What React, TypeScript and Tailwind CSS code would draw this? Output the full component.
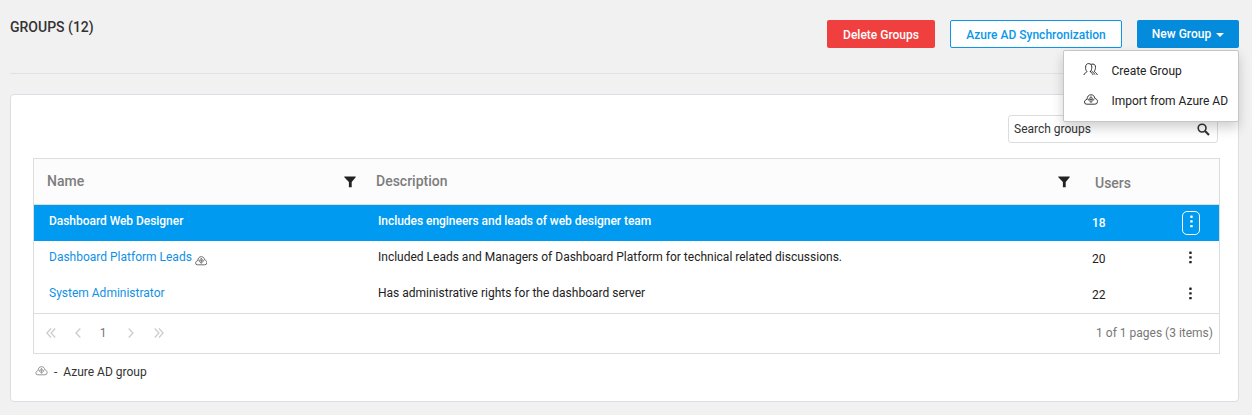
import React from "react";

type IconProps = { className?: string };

function CloudIcon({ className = "" }: IconProps) {
  return (
    <svg viewBox="0 0 14 11" className={className} fill="none" stroke="currentColor" strokeWidth="0.9" strokeLinejoin="round">
      <path d="M2.6 10.2A2.1 2.1 0 0 1 .5 8C.5 6.6 1.6 5.9 3.1 5.2 3.1 2.6 4.6.8 7 .8 9.3.8 10.6 2.2 10.8 4.4 12.5 4.8 13.5 6 13.5 7.6A2.6 2.6 0 0 1 10.9 10.2Z" />
      <path d="M7 2.7 9.8 5.6 7 8.5 4.2 5.6ZM7 2.8V8.4M4.6 5.6H9.4" strokeWidth="0.7" />
    </svg>
  );
}

function UsersIcon({ className = "" }: IconProps) {
  return (
    <svg viewBox="0 0 15 13" className={className} fill="none" stroke="currentColor" strokeWidth="0.95" strokeLinejoin="round" strokeLinecap="round">
      <path d="M.9 11.6C1.1 9.9 3.9 9.8 3.9 8.4 2.9 7.4 2.6 6.2 2.6 4.2 2.6 1.8 3.8.6 5.7.6S8.8 1.8 8.8 4.2C8.8 6.2 8.4 7.5 7.4 8.4" />
      <path d="M8.5 1.2C11 .4 12.7 1.9 12.5 4.4 12.4 6.3 12 7.2 11.3 8.2 11.3 9.3 14 9.9 14.3 11.6M7.4 8.4C7.4 9.8 9.1 9.6 10 11.6M8.9 8.3 12 11.3" />
    </svg>
  );
}

function FunnelIcon() {
  return (
    <svg viewBox="0 0 12 12" className="h-3 w-3 shrink-0 text-[#222]" fill="currentColor">
      <path d="M.3.4H11.7V1.3L7.7 6V11.2H4.9V6L.3 1.3Z" />
    </svg>
  );
}

function SearchIcon() {
  return (
    <svg viewBox="0 0 13 13" className="h-[13px] w-[13px] text-[#333]" fill="none" stroke="currentColor">
      <circle cx="5.1" cy="5.1" r="3.9" strokeWidth="1.6" />
      <path d="M8 8 12 12" strokeWidth="2.1" />
    </svg>
  );
}

function Dots() {
  return (
    <svg viewBox="0 0 3 13" className="h-[13px] w-[3px]" fill="currentColor">
      <rect x="0.2" y="0.5" width="2.5" height="2.4" rx="0.6" />
      <rect x="0.2" y="5.2" width="2.5" height="2.4" rx="0.6" />
      <rect x="0.2" y="9.9" width="2.5" height="2.4" rx="0.6" />
    </svg>
  );
}

function Chevron({ double = false, right = false }: { double?: boolean; right?: boolean }) {
  return (
    <svg viewBox="0 0 10 10" className={right ? "h-[10px] w-[10px] rotate-180" : "h-[10px] w-[10px]"} fill="none" stroke="#cdcdcd" strokeWidth="1.3">
      {double ? <path d="M5 .5.9 5 5 9.5M9.2.5 5.1 5 9.2 9.5" /> : <path d="M7.3.5 3 5 7.3 9.5" />}
    </svg>
  );
}

const rows = [
  { name: "Dashboard Web Designer", description: "Includes engineers and leads of web designer team", users: 18, selected: true },
  { name: "Dashboard Platform Leads", description: "Included Leads and Managers of Dashboard Platform for technical related discussions.", users: 20, azure: true },
  { name: "System Administrator", description: "Has administrative rights for the dashboard server", users: 22 },
];

export default function App() {
  return (
    <div className="h-[415px] w-[1252px] overflow-hidden bg-[#f1f1f1] pl-[10px] pr-[13px] font-['Roboto',sans-serif] text-[12px] leading-4 text-[#222]">
      <header className="flex h-[74px] items-start border-b border-[#dfe1e2] pt-5">
        <h1 className="mr-auto text-[14px] leading-[15px] font-medium text-[#333]">GROUPS (12)</h1>
        <button className="mr-[15px] h-7 w-[108px] rounded-[2px] bg-[#f03f3f] pt-[2px] text-center font-medium text-white">Delete Groups</button>
        <button className="mr-[15px] h-7 w-[172px] rounded-[2px] border border-[#0a97ea] bg-white pt-[2px] text-center font-medium text-[#0a97ea]">Azure AD Synchronization</button>
        <div className="relative">
          <button className="flex h-7 w-[102px] items-center justify-center gap-[5px] rounded-[2px] bg-[#058bdb] font-medium text-white">
            New Group
            <span className="mt-[2px] border-x-4 border-t-4 border-x-transparent border-t-white" />
          </button>
          <div className="absolute top-[30px] right-0 z-10 h-[72px] w-[176px] rounded-[2px] border border-[#c6c6c6] bg-white pt-[5px] shadow-[0_6px_12px_rgba(0,0,0,0.18)]">
            <div className="flex h-[30px] items-center pl-[20px]">
              <UsersIcon className="mb-1 -ml-px h-[13px] w-[15px]" />
              <span className="ml-[13.5px]">Create Group</span>
            </div>
            <div className="flex h-[30px] items-center pl-[20px]">
              <CloudIcon className="mb-1 h-[11px] w-[14px]" />
              <span className="ml-[13.5px] whitespace-nowrap">Import from Azure AD</span>
            </div>
          </div>
        </div>
      </header>

      <main className="mt-5 h-[308px] rounded-[4px] border border-[#d9dfe4] bg-white pt-5 pr-[18px] pl-[22px]">
        <div className="mr-[2px] ml-auto flex h-7 w-[210px] items-center justify-between rounded-[3px] border border-[#ddd] pr-[7px] pl-[5px] text-[#333]">
          <span>Search groups</span>
          <SearchIcon />
        </div>

        <section className="mt-[15px] h-[196px] w-[1187px] border border-[#ddd]">
          <div className="flex h-[46px] items-center border-b border-[#ddd] bg-[#fcfcfc] text-[14px] font-medium text-[#7d7d7d]">
            <div className="flex w-[329px] items-center justify-between pr-[7px] pl-[13px]">
              <span className="pb-px">Name</span>
              <FunnelIcon />
            </div>
            <div className="flex w-[714px] items-center justify-between pr-[7px] pl-[13px]">
              <span className="pb-px">Description</span>
              <FunnelIcon />
            </div>
            <span className="mt-[3px] pl-[18px]">Users</span>
          </div>

          {rows.map((row) => (
            <div key={row.name} className={row.selected ? "flex h-9 items-center bg-[#009af0] font-medium tracking-[-0.04px] text-white" : "flex h-9 items-center bg-white"}>
              <div className="flex w-[329px] items-center pb-[4px] pl-[15px]">
                <span className={row.selected ? "" : "text-[#1190e5]"}>{row.name}</span>
                {row.azure && <CloudIcon className="mt-[6px] -mb-[2px] ml-[3px] h-[9.5px] w-[12.5px] text-[#444]" />}
              </div>
              <span className="w-[714px] pb-[4px] pl-[15px]">{row.description}</span>
              <span className="w-[105px] pl-[15px]">{row.users}</span>
              <button className={row.selected ? "flex h-6 w-[18px] justify-center rounded-[5px] border border-white pt-[3px]" : "flex h-6 w-[18px] items-center justify-center pr-px pb-[3px]"} aria-label="More actions">
                <Dots />
              </button>
            </div>
          ))}

          <footer className="flex h-10 items-center border-t border-[#ddd] pr-[6px] pb-px pl-[12px] text-[#777]">
            <Chevron double />
            <span className="ml-[17px] flex"><Chevron /></span>
            <span className="w-[43px] pr-[3px] text-center">1</span>
            <Chevron right />
            <span className="ml-[18px] flex"><Chevron double right /></span>
            <span className="ml-auto">1 of 1 pages (3 items)</span>
          </footer>
        </section>

        <div className="mt-[10px] flex items-center pl-[2px] text-[#333]">
          <CloudIcon className="mb-[2px] h-[9.5px] w-[13px] text-[#777]" />
          <span className="ml-[6px]">-</span>
          <span className="ml-[6px]">Azure AD group</span>
        </div>
      </main>
    </div>
  );
}
